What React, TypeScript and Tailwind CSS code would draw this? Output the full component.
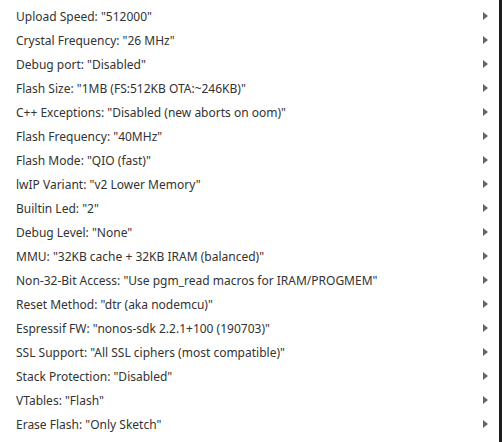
const items = [
  'Upload Speed: "512000"',
  'Crystal Frequency: "26 MHz"',
  'Debug port: "Disabled"',
  'Flash Size: "1MB (FS:512KB OTA:~246KB)"',
  'C++ Exceptions: "Disabled (new aborts on oom)"',
  'Flash Frequency: "40MHz"',
  'Flash Mode: "QIO (fast)"',
  'lwIP Variant: "v2 Lower Memory"',
  'Builtin Led: "2"',
  'Debug Level: "None"',
  'MMU: "32KB cache + 32KB IRAM (balanced)"',
  'Non-32-Bit Access: "Use pgm_read macros for IRAM/PROGMEM"',
  'Reset Method: "dtr (aka nodemcu)"',
  'Espressif FW: "nonos-sdk 2.2.1+100 (190703)"',
  'SSL Support: "All SSL ciphers (most compatible)"',
  'Stack Protection: "Disabled"',
  'VTables: "Flash"',
  'Erase Flash: "Only Sketch"',
];

export default function App() {
  return (
    <div className="flex h-[442px] w-[502px] bg-[#1e1e1e]">
      {/* menu panel */}
      <div className="w-[499px] bg-white pt-1 pb-[6px] font-['Noto_Sans',sans-serif] text-[12px] text-[#333]">
        {items.map((label) => (
          <div key={label} className="flex h-6 items-center justify-between pl-4 pr-[11px]">
            <span className="whitespace-nowrap pt-[2px]">{label}</span>
            <span className="h-0 w-0 border-y-4 border-l-[5px] border-y-transparent border-l-[#666]" />
          </div>
        ))}
      </div>
    </div>
  );
}
